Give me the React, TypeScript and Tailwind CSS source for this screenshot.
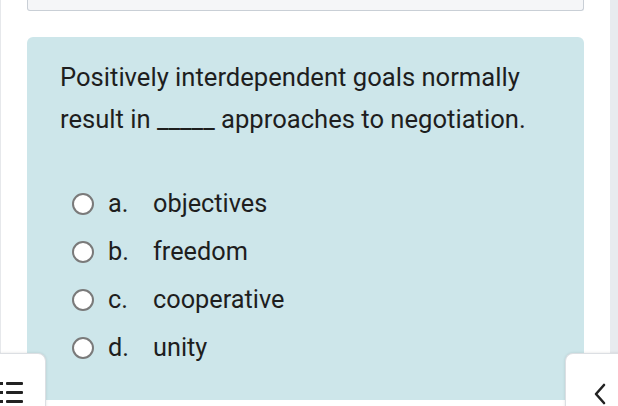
import React from 'react'

const options = [
  { key: 'a.', text: 'objectives' },
  { key: 'b.', text: 'freedom' },
  { key: 'c.', text: 'cooperative' },
  { key: 'd.', text: 'unity' },
]

export default function App() {
  return (
    <div className="relative h-[406px] w-[618px] overflow-hidden bg-white font-['Roboto',sans-serif] text-[#1e1e1e]">
      <div className="flex h-full">
        <div className="w-px bg-[#e6e8eb]" />
        <div className="flex-1 px-[26px]">
          <div className="h-[11px] rounded-b-[3px] border border-t-0 border-[#c9cfd6] bg-[#f5f6f8]" />
          <div className="mt-[26px] h-[363px] rounded-t-md bg-[#cde6ea] pl-[33px] pt-[19px]">
            <p className="text-[25.6px] leading-[42px]">
              Positively interdependent goals normally
              <br />
              result in _____ approaches to negotiation.
            </p>
            <ul className="mt-[40px]">
              {options.map(o => (
                <li key={o.key} className="flex h-12 items-center text-[25.3px]">
                  <span className="ml-[12px] mr-[14px] h-[22px] w-[22px] rounded-full border-2 border-[#7a7a7a] bg-white" />
                  <span className="w-[45px]">{o.key}</span>
                  <span>{o.text}</span>
                </li>
              ))}
            </ul>
          </div>
        </div>
        <div className="w-2 bg-[#e8ebef]" />
      </div>

      <button className="absolute left-0 top-[353px] h-[70px] w-[46px] rounded-tr-lg border border-l-0 border-[#dcdfe3] bg-white shadow-[0_0_3px_rgba(0,0,0,0.12)]">
        <svg width="24" height="22" viewBox="0 0 24 22" className="absolute left-0 top-[28px]" fill="#222">
          <rect x="0" y="0" width="3" height="3" />
          <rect x="6" y="0" width="17" height="3" rx="1" />
          <rect x="0" y="9" width="3" height="3" />
          <rect x="6" y="9" width="17" height="3" rx="1" />
          <rect x="0" y="18" width="3" height="3" />
          <rect x="6" y="18" width="17" height="3" rx="1" />
        </svg>
      </button>

      <button className="absolute left-[565px] top-[353px] flex h-[70px] w-[60px] items-start justify-start rounded-tl-lg border border-r-0 border-[#dcdfe3] bg-white shadow-[0_0_3px_rgba(0,0,0,0.12)]">
        <svg width="14" height="22" viewBox="0 0 14 22" className="absolute left-[27px] top-[29px]" fill="none" stroke="#222" strokeWidth="2.6" strokeLinecap="round" strokeLinejoin="round">
          <path d="M11 2 L3 11 L11 20" />
        </svg>
      </button>
    </div>
  )
}
